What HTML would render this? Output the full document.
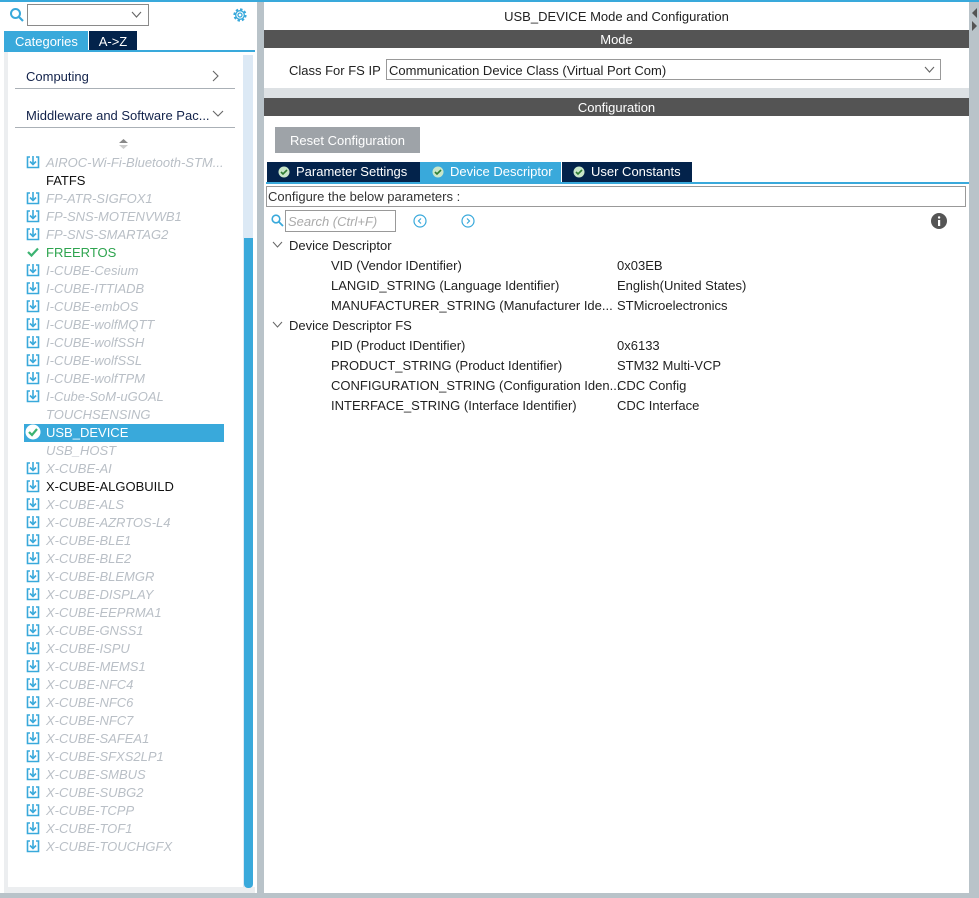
<!DOCTYPE html>
<html><head><meta charset="utf-8"><style>
*{margin:0;padding:0;box-sizing:border-box}
body{width:979px;height:898px;position:relative;background:#b9c3c9;font-family:"Liberation Sans",sans-serif;font-size:13px;color:#222;overflow:hidden}
.a{position:absolute}
.it{position:absolute;left:26px;height:18px;line-height:18px;white-space:nowrap}
.it span{position:absolute;left:20px;top:0}
.g{color:#b9bfc6;font-style:italic}
.ic{position:absolute;left:0;top:2px;width:14px;height:14px}
.row{position:absolute;left:331px;white-space:nowrap;height:20px;line-height:20px}
.val{position:absolute;left:617px;white-space:nowrap;height:20px;line-height:20px}
</style></head><body>
<div class="a" style="left:0;top:0;width:979px;height:2px;background:#39a9db"></div>
<div class="a" style="left:0;top:2px;width:257px;height:891px;background:#fff"></div>
<svg class="a" style="left:9px;top:7px" width="16" height="16"><circle cx="6.5" cy="6.5" r="4.5" fill="none" stroke="#39a9db" stroke-width="2"/><line x1="10" y1="10" x2="14" y2="14" stroke="#39a9db" stroke-width="2.2"/></svg>
<div class="a" style="left:27px;top:4px;width:122px;height:22px;border:1px solid #8a8a8a;background:#fff"></div>
<svg class="a" style="left:131px;top:11px" width="11" height="8"><polyline points="1,1 5.5,6 10,1" fill="none" stroke="#666" stroke-width="1.1"/></svg>
<svg class="a" style="left:231px;top:6px" width="18" height="18" viewBox="0 0 18 18"><circle cx="9" cy="9" r="5.5" fill="none" stroke="#39a9db" stroke-width="2.2" stroke-dasharray="2.4 1.9"/><circle cx="9" cy="9" r="4.3" fill="none" stroke="#39a9db" stroke-width="1.3"/><circle cx="9" cy="9" r="2" fill="none" stroke="#39a9db" stroke-width="1.3"/></svg>
<div class="a" style="left:4px;top:31px;width:84px;height:20px;background:#39a9db;color:#fff;line-height:21px;padding-left:11px;font-size:13px">Categories</div>
<div class="a" style="left:89px;top:31px;width:48px;height:20px;background:#03234b;color:#fff;line-height:21px;text-align:center">A-&gt;Z</div>
<div class="a" style="left:4px;top:50px;width:251px;height:2px;background:#39a9db"></div>
<div class="a" style="left:4px;top:52px;width:4px;height:841px;background:#eceef0"></div>
<div class="a" style="left:4px;top:887px;width:251px;height:6px;background:#eceef0"></div>
<div class="a" style="left:243px;top:55px;width:10px;height:832px;background:#dce9f5"></div>
<div class="a" style="left:244px;top:238px;width:9px;height:650px;background:#39a9db;border-radius:0 0 4px 4px"></div>
<div class="a" style="left:26px;top:68px;line-height:18px;color:#13234b;font-size:13px">Computing</div>
<svg class="a" style="left:212px;top:70px" width="8" height="12"><polyline points="1,1 6,6 1,11" fill="none" stroke="#666" stroke-width="1.1"/></svg>
<div class="a" style="left:15px;top:88px;width:220px;height:1px;background:#aab0b6"></div>
<div class="a" style="left:26px;top:107px;line-height:18px;color:#13234b;font-size:13px">Middleware and Software Pac...</div>
<svg class="a" style="left:212px;top:110px" width="12" height="8"><polyline points="1,1 6,6 11,1" fill="none" stroke="#666" stroke-width="1.1"/></svg>
<div class="a" style="left:15px;top:127px;width:220px;height:1px;background:#aab0b6"></div>
<svg class="a" style="left:119px;top:139px" width="9" height="11"><polygon points="4.5,0 9,4 0,4" fill="#888"/><polygon points="0,6 9,6 4.5,10" fill="#ccc"/></svg>
<div class="a" style="left:24px;top:424px;width:200px;height:18px;background:#39a9db"></div>
<div id="list"></div>
<div class="a" style="left:264px;top:2px;width:705px;height:891px;background:#fff"></div>
<div class="a" style="left:264px;top:88px;width:705px;height:10px;background:#dde1e4"></div>
<div class="a" style="left:969px;top:2px;width:10px;height:896px;background:#b9c3c9"></div>
<svg class="a" style="left:969px;top:6px" width="10" height="26"><polygon points="8,2 3,7 8,12" fill="#545454"/><polygon points="3,15 8,20 3,25" fill="#545454"/></svg>
<div class="a" style="left:264px;top:8px;width:705px;text-align:center;line-height:18px;color:#222">USB_DEVICE Mode and Configuration</div>
<div class="a" style="left:264px;top:30px;width:705px;height:18px;background:#545454;color:#fff;text-align:center;line-height:19px">Mode</div>
<div class="a" style="left:289px;top:61px;line-height:20px">Class For FS IP</div>
<div class="a" style="left:386px;top:59px;width:555px;height:21px;border:1px solid #999;line-height:21px;padding-left:2px">Communication Device Class (Virtual Port Com)</div>
<svg class="a" style="left:924px;top:66px" width="11" height="8"><polyline points="1,1 5.5,6 10,1" fill="none" stroke="#666" stroke-width="1.1"/></svg>
<div class="a" style="left:264px;top:98px;width:705px;height:18px;background:#545454;color:#fff;text-align:center;line-height:19px">Configuration</div>
<div class="a" style="left:275px;top:127px;width:145px;height:26px;background:#9ea3a8;color:#fff;line-height:27px;text-align:center">Reset Configuration</div>
<div class="a" style="left:267px;top:162px;width:153px;height:20px;background:#03234b;color:#fff;line-height:20px;padding-left:29px">Parameter Settings</div>
<div class="a" style="left:420px;top:162px;width:141px;height:20px;background:#39a9db;color:#fff;line-height:20px;padding-left:30px">Device Descriptor</div>
<div class="a" style="left:562px;top:162px;width:130px;height:20px;background:#03234b;color:#fff;line-height:20px;padding-left:29px">User Constants</div>
<svg class="a" style="left:278px;top:166px" width="12" height="12"><circle cx="6" cy="6" r="5.5" fill="#c8e6c9"/><polyline points="3,6 5,8 9,4" fill="none" stroke="#2e7d32" stroke-width="1.6"/></svg>
<svg class="a" style="left:432px;top:166px" width="12" height="12"><circle cx="6" cy="6" r="5.5" fill="#c8e6c9"/><polyline points="3,6 5,8 9,4" fill="none" stroke="#2e7d32" stroke-width="1.6"/></svg>
<svg class="a" style="left:573px;top:166px" width="12" height="12"><circle cx="6" cy="6" r="5.5" fill="#c8e6c9"/><polyline points="3,6 5,8 9,4" fill="none" stroke="#2e7d32" stroke-width="1.6"/></svg>
<div class="a" style="left:266px;top:182px;width:703px;height:2px;background:#39a9db"></div>
<div class="a" style="left:266px;top:186px;width:700px;height:21px;border:1px solid #999;line-height:20px;padding-left:1px;color:#333">Configure the below parameters :</div>
<svg class="a" style="left:271px;top:214px" width="13" height="13"><circle cx="5" cy="5" r="3.8" fill="none" stroke="#39a9db" stroke-width="1.6"/><line x1="8" y1="8" x2="12" y2="12" stroke="#39a9db" stroke-width="1.8"/></svg>
<div class="a" style="left:285px;top:210px;width:111px;height:22px;border:1px solid #999;line-height:21px;padding-left:2px;color:#aaa;font-style:italic">Search (Ctrl+F)</div>
<svg class="a" style="left:413px;top:214px" width="14" height="14"><circle cx="7" cy="7" r="6" fill="none" stroke="#39a9db" stroke-width="1.2"/><polyline points="8,4.5 5.5,7 8,9.5" fill="none" stroke="#39a9db" stroke-width="1.2"/></svg>
<svg class="a" style="left:461px;top:214px" width="14" height="14"><circle cx="7" cy="7" r="6" fill="none" stroke="#39a9db" stroke-width="1.2"/><polyline points="6,4.5 8.5,7 6,9.5" fill="none" stroke="#39a9db" stroke-width="1.2"/></svg>
<svg class="a" style="left:931px;top:213px" width="16" height="16"><circle cx="8" cy="8" r="8" fill="#555"/><rect x="7" y="7" width="2.2" height="6" fill="#fff"/><circle cx="8.1" cy="4.5" r="1.2" fill="#fff"/></svg>
<svg class="a" style="left:272px;top:241px" width="11" height="8"><polyline points="1,1 5.5,6 10,1" fill="none" stroke="#666" stroke-width="1"/></svg>
<div class="a" style="left:289px;top:236px;line-height:20px">Device Descriptor</div>
<div class="row" style="top:256px">VID (Vendor IDentifier)</div><div class="val" style="top:256px">0x03EB</div>
<div class="row" style="top:276px">LANGID_STRING (Language Identifier)</div><div class="val" style="top:276px">English(United States)</div>
<div class="row" style="top:296px">MANUFACTURER_STRING (Manufacturer Ide...</div><div class="val" style="top:296px">STMicroelectronics</div>
<svg class="a" style="left:272px;top:321px" width="11" height="8"><polyline points="1,1 5.5,6 10,1" fill="none" stroke="#666" stroke-width="1"/></svg>
<div class="a" style="left:289px;top:316px;line-height:20px">Device Descriptor FS</div>
<div class="row" style="top:336px">PID (Product IDentifier)</div><div class="val" style="top:336px">0x6133</div>
<div class="row" style="top:356px">PRODUCT_STRING (Product Identifier)</div><div class="val" style="top:356px">STM32 Multi-VCP</div>
<div class="row" style="top:376px">CONFIGURATION_STRING (Configuration Iden...</div><div class="val" style="top:376px">CDC Config</div>
<div class="row" style="top:396px">INTERFACE_STRING (Interface Identifier)</div><div class="val" style="top:396px">CDC Interface</div>
<script>
var items=[["AIROC-Wi-Fi-Bluetooth-STM...","d"],["FATFS","n"],["FP-ATR-SIGFOX1","d"],["FP-SNS-MOTENVWB1","d"],["FP-SNS-SMARTAG2","d"],["FREERTOS","f"],["I-CUBE-Cesium","d"],["I-CUBE-ITTIADB","d"],["I-CUBE-embOS","d"],["I-CUBE-wolfMQTT","d"],["I-CUBE-wolfSSH","d"],["I-CUBE-wolfSSL","d"],["I-CUBE-wolfTPM","d"],["I-Cube-SoM-uGOAL","d"],["TOUCHSENSING","g"],["USB_DEVICE","s"],["USB_HOST","g"],["X-CUBE-AI","d"],["X-CUBE-ALGOBUILD","b"],["X-CUBE-ALS","d"],["X-CUBE-AZRTOS-L4","d"],["X-CUBE-BLE1","d"],["X-CUBE-BLE2","d"],["X-CUBE-BLEMGR","d"],["X-CUBE-DISPLAY","d"],["X-CUBE-EEPRMA1","d"],["X-CUBE-GNSS1","d"],["X-CUBE-ISPU","d"],["X-CUBE-MEMS1","d"],["X-CUBE-NFC4","d"],["X-CUBE-NFC6","d"],["X-CUBE-NFC7","d"],["X-CUBE-SAFEA1","d"],["X-CUBE-SFXS2LP1","d"],["X-CUBE-SMBUS","d"],["X-CUBE-SUBG2","d"],["X-CUBE-TCPP","d"],["X-CUBE-TOF1","d"],["X-CUBE-TOUCHGFX","d"]];
var dl='<svg class="ic" viewBox="0 0 14 14"><path d="M4 2H1.5v10.5h11V2H10" fill="none" stroke="#39a9db" stroke-width="1.6"/><line x1="7" y1="1" x2="7" y2="9" stroke="#39a9db" stroke-width="1.6"/><polyline points="4,6.5 7,9.5 10,6.5" fill="none" stroke="#39a9db" stroke-width="1.6"/></svg>';
var h='';
items.forEach(function(it,i){var y=153+i*18,t=it[1],ic='',cls='',st='';
if(t=='d'){ic=dl;cls='g'}
else if(t=='b'){ic=dl;st='color:#111'}
else if(t=='g'){cls='g'}
else if(t=='n'){st='color:#111'}
else if(t=='f'){ic='<svg class="ic" viewBox="0 0 14 14"><polyline points="2,7 5.5,10.5 12,3.5" fill="none" stroke="#3cb371" stroke-width="2.2"/></svg>';st='color:#2ea44f'}
else if(t=='s'){ic='<svg class="ic" style="top:1px;width:16px;height:16px;left:-1px" viewBox="0 0 16 16"><circle cx="8" cy="8" r="7.5" fill="#fff"/><polyline points="4,8 7,11 12,5" fill="none" stroke="#3cb371" stroke-width="2.2"/></svg>';st='color:#fff'}
h+='<div class="it" style="top:'+y+'px">'+ic+'<span class="'+cls+'" style="'+st+';top:1px">'+it[0]+'</span></div>';});
document.getElementById('list').innerHTML=h;
</script>
</body></html>
